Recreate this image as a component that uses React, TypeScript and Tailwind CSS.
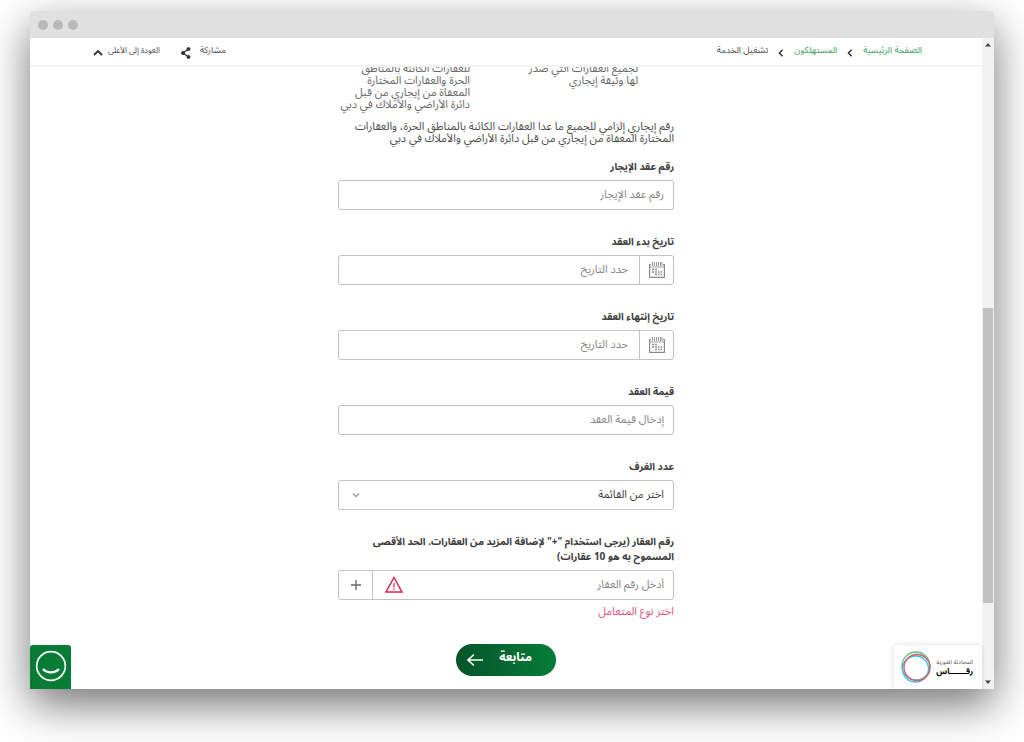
import { type FC, type ReactNode } from 'react'

const labelClass = 'block text-[10px] leading-[15px] font-bold text-[#3c3c3c]'
const inputClass = 'min-w-0 flex-1 bg-transparent px-[9px] text-[11px] text-[#3c3c3c] outline-none placeholder:text-[#858585]'

const Chevron: FC<{ className: string; d: string }> = ({ className, d }) => (
  <svg className={className} viewBox="0 0 10 10" fill="none" stroke="currentColor" strokeWidth="1.8" aria-hidden="true">
    <path d={d} />
  </svg>
)

const CalendarIcon: FC = () => (
  <svg className="h-4 w-4" viewBox="0 0 16 16" fill="none" stroke="#8a8a8a" aria-hidden="true">
    <path d="M2 2.5H.6v12.8h14.8V2.500H14" strokeWidth="1.2" />
    <path d="M1 5h14" strokeWidth=".8" />
    <path d="M3.500 0v4M5.500 0v4M7.500 0v4M9.500 0v4M11.500 0v4M13 0v4" strokeWidth=".9" />
    <path d="M3 7.500h2M6 7.500h2M3 10h2M6 10h2M9 10h1.500M11.500 10H13M6 12.500h2M9 12.500h1.500M11.500 12.500H13" strokeWidth="1.3" />
  </svg>
)

const Field: FC<{ id: string; label: string; children: ReactNode }> = ({ id, label, children }) => (
  <div>
    <label htmlFor={id} className={labelClass}>{label}</label>
    <div className="mt-1.5 flex h-[30px] items-stretch rounded-[3px] border border-[#c2c2c2] bg-white">
      {children}
    </div>
  </div>
)

const DateField: FC<{ id: string; label: string }> = ({ id, label }) => (
  <Field id={id} label={label}>
    <button type="button" aria-label={label} className="flex w-[34px] items-center justify-center border-l border-[#c2c2c2]">
      <CalendarIcon />
    </button>
    <input id={id} type="text" placeholder="حدد التاريخ" className={`${inputClass} ps-[11px]`} />
  </Field>
)

const TopBar: FC = () => (
  <header className="flex h-[29px] shrink-0 items-center justify-between border-b-2 border-[#f3f3f3] pr-[60px] pb-0.5 pl-[63px] text-[9px] leading-4 text-[#4a4a4a]">
    <nav className="flex items-center gap-[9px]">
      <a href="#home" className="text-[#3f9d63]">الصفحة الرئيسية</a>
      <Chevron className="mt-1 h-2 w-2 text-[#333]" d="M7 1 3 5l4 4" />
      <a href="#consumers" className="text-[#3f9d63]">المستهلكون</a>
      <Chevron className="mt-1 h-2 w-2 text-[#333]" d="M7 1 3 5l4 4" />
      <span>تشغيل الخدمة</span>
    </nav>
    <div className="flex items-center gap-5">
      <button type="button" className="flex items-center gap-2">
        مشاركة
        <svg className="mt-1 h-3 w-3" viewBox="0 0 12 12" fill="#333" stroke="#333" aria-hidden="true">
          <path d="M8.5 2 3 6l5.5 4" fill="none" strokeWidth="1.2" />
          <circle cx="8.5" cy="2" r="1.5" />
          <circle cx="3" cy="6" r="1.5" />
          <circle cx="8.5" cy="10" r="1.5" />
        </svg>
      </button>
      <a href="#top" className="flex items-center gap-[5px] text-[8px]">
        العودة إلى الأعلى
        <Chevron className="mt-1 h-2.5 w-2.5 text-[#333]" d="M1 7l4-4 4 4" />
      </a>
    </div>
  </header>
)

const Scrollbar: FC = () => (
  <div className="flex w-3 shrink-0 flex-col items-center bg-[#f1f1f1] py-1" aria-hidden="true">
    <svg className="h-1.5 w-1.5" viewBox="0 0 6 6" fill="#444"><path d="M3 1l3 3.5H0z" /></svg>
    <div className="flex-[260]" />
    <div className="w-2.5 flex-[294] bg-[#c1c1c1]" />
    <div className="flex-[76]" />
    <svg className="h-1.5 w-1.5" viewBox="0 0 6 6" fill="#444"><path d="M3 5 0 1.5h6z" /></svg>
  </div>
)

export default function App() {
  return (
    <div
      dir="rtl"
      className="flex min-h-screen flex-col bg-white px-[30px] pt-[11px] pb-[53px] font-['Noto_Sans_Arabic','Noto_Sans','DejaVu_Sans',sans-serif]"
    >
      <div className="flex flex-1 flex-col overflow-hidden rounded-t-[3px] shadow-[0_16px_44px_rgba(0,0,0,0.55)]">
        <div dir="ltr" className="flex h-[27px] items-center gap-[5px] bg-[#e0e0e0] px-2">
          <span className="h-2.5 w-2.5 rounded-full bg-[#b9b9b9]" />
          <span className="h-2.5 w-2.5 rounded-full bg-[#b9b9b9]" />
          <span className="h-2.5 w-2.5 rounded-full bg-[#b9b9b9]" />
        </div>
        <div dir="ltr" className="flex flex-1 bg-[#fefefe]">
          <div dir="rtl" className="relative flex min-w-0 flex-1 flex-col">
            <TopBar />
            <main className="mx-auto w-full max-w-[336px]">
              <div className="overflow-hidden pb-1">
                <div className="-mt-1 grid grid-cols-[168px_1fr] text-[11px] leading-3 text-[#666]">
                  <p className="ps-9">لجميع العقارات التي صدر<br />لها وثيقة إيجاري</p>
                  <p className="ps-9">
                    للعقارات الكائنة بالمناطق<br />الحرة والعقارات المختارة<br />المعفاة من إيجاري من قبل<br />دائرة الأراضي والأملاك في دبي
                  </p>
                </div>
              </div>
              <p className="mt-1.5 text-[11px] leading-3 text-[#4a4a4a]">
                رقم إيجاري إلزامي للجميع ما عدا العقارات الكائنة بالمناطق الحرة، والعقارات<br />المختارة المعفاة من إيجاري من قبل دائرة الأراضي والأملاك في دبي
              </p>
              <form className="mt-3.5 flex flex-col gap-6">
                <Field id="contract-number" label="رقم عقد الإيجار">
                  <input id="contract-number" type="text" placeholder="رقم عقد الإيجار" className={inputClass} />
                </Field>
                <DateField id="start-date" label="تاريخ بدء العقد" />
                <DateField id="end-date" label="تاريخ إنتهاء العقد" />
                <Field id="contract-value" label="قيمة العقد">
                  <input id="contract-value" type="text" placeholder="إدخال قيمة العقد" className={inputClass} />
                </Field>
                <Field id="rooms" label="عدد الغرف">
                  <div className="relative flex flex-1">
                    <select id="rooms" className="w-full appearance-none bg-transparent px-[9px] text-[11px] text-[#3c3c3c] outline-none">
                      <option>اختر من القائمة</option>
                    </select>
                    <Chevron className="pointer-events-none absolute top-2.5 left-[13px] h-2 w-2 text-[#a0a0a0]" d="M1 3l4 4 4-4" />
                  </div>
                </Field>
                <div>
                  <Field id="property-number" label='رقم العقار (يرجى استخدام "+" لإضافة المزيد من العقارات. الحد الأقصى المسموح به هو 10 عقارات)'>
                    <input id="property-number" type="text" placeholder="أدخل رقم العقار" className={inputClass} />
                    <svg className="me-3 h-[18px] w-[18px] self-center" viewBox="0 0 18 18" fill="none" stroke="#e0244f" strokeWidth="1.5" role="img" aria-label="خطأ">
                      <path d="M9 1.5 17 16H1z" />
                      <path d="M9 7v4.5M9 12.5V14" strokeWidth="1.2" />
                    </svg>
                    <button type="button" aria-label="إضافة" className="flex w-[34px] items-center justify-center border-r border-[#c2c2c2]">
                      <svg className="h-2.5 w-2.5" viewBox="0 0 10 10" stroke="#666" strokeWidth="1.3" aria-hidden="true">
                        <path d="M0 5h10M5 0v10" />
                      </svg>
                    </button>
                  </Field>
                  <p className="mt-1 text-[11px] leading-4 text-[#dc5478]">اختر نوع المتعامل</p>
                  <button
                    type="submit"
                    className="mx-auto mt-6 mb-3 flex h-8 w-[100px] items-center gap-4 rounded-full bg-linear-to-r from-[#04542a] to-[#067c38] ps-6 text-xs font-bold text-white"
                  >
                    <span className="pb-1">متابعة</span>
                    <svg className="h-4 w-4" viewBox="0 0 16 16" fill="none" stroke="currentColor" strokeWidth="1.6" aria-hidden="true">
                      <path d="M16 8H1M7 2.5 1 8l6 5.5" />
                    </svg>
                  </button>
                </div>
              </form>
            </main>
            <button type="button" aria-label="السعادة" className="absolute bottom-0 left-0 flex h-11 w-[41px] items-center justify-center rounded-t-[3px] bg-[#087c35] pb-0.5">
              <svg className="h-8 w-8" viewBox="0 0 32 32" fill="none" stroke="#fff" aria-hidden="true">
                <circle cx="16" cy="16" r="14.3" strokeWidth="1.7" />
                <path d="M8 19c4 4.5 12 4.5 16 0" strokeWidth="2.2" />
              </svg>
            </button>
            <a href="#rammas" className="absolute right-0 bottom-0 flex h-11 w-[88px] items-center gap-[5px] rounded-t-[3px] bg-white pr-[9px] shadow-[0_0_4px_rgba(0,0,0,0.15)]">
              <span className="flex flex-col whitespace-nowrap text-black">
                <span className="text-[6px] leading-[10px] text-[#555]">المحادثة الفورية</span>
                <span className="text-[8px] leading-[10px] font-bold">رقـــــــاس</span>
              </span>
              <svg className="h-8 w-[30px] shrink-0" viewBox="0 0 30 32" fill="none" strokeWidth="1.3" aria-hidden="true">
                <circle cx="15" cy="15" r="14" stroke="#57c27c" />
                <circle cx="14.5" cy="18" r="13" stroke="#2cc4e8" />
                <circle cx="16" cy="16.5" r="13" stroke="#e0506c" />
              </svg>
            </a>
          </div>
          <Scrollbar />
        </div>
      </div>
    </div>
  )
}
